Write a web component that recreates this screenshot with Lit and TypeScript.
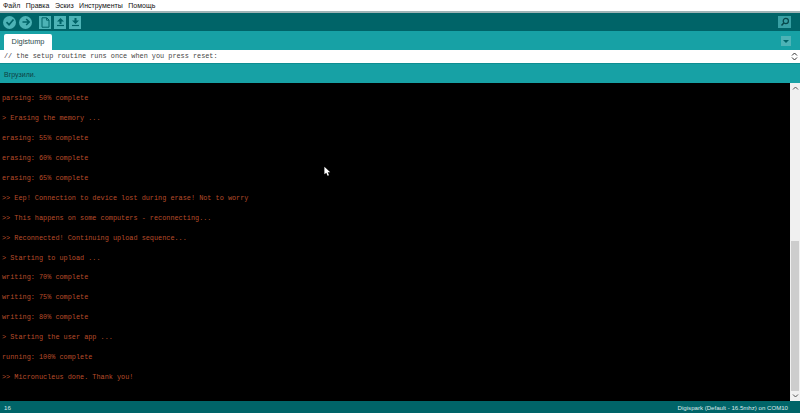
import { LitElement, html, css, svg } from "lit";
import { customElement } from "lit/decorators.js";

const LINES = [
  "parsing: 50% complete",
  "> Erasing the memory ...",
  "erasing: 55% complete",
  "erasing: 60% complete",
  "erasing: 65% complete",
  ">> Eep! Connection to device lost during erase! Not to worry",
  ">> This happens on some computers - reconnecting...",
  ">> Reconnected! Continuing upload sequence...",
  "> Starting to upload ...",
  "writing: 70% complete",
  "writing: 75% complete",
  "writing: 80% complete",
  "> Starting the user app ...",
  "running: 100% complete",
  ">> Micronucleus done. Thank you!",
];
const MENU = ["Файл", "Правка", "Эскиз", "Инструменты", "Помощь"];

@customElement("app-root")
export class AppRoot extends LitElement {
  static styles = css`
    :host { display: flex; flex-direction: column; width: 800px; height: 413px; overflow: hidden; font-family: "Liberation Sans", Arial, sans-serif; background: #000; position: relative; }
    .menu { height: 11px; background: #fff; display: flex; gap: 5.5px; padding: 0 0 0 3px; font-size: 7px; line-height: 11px; color: #111; flex: none; }
    .sep { height: 2px; background: #9fb4b6; flex: none; }
    .toolbar { height: 18px; background: #006468; flex: none; display: flex; align-items: center; padding: 0 9px 0 3px; }
    .round { width: 13px; height: 13px; border-radius: 50%; background: #4db3b6; margin-right: 3px; display: flex; align-items: center; justify-content: center; }
    .sq { width: 12px; height: 13px; background: #4db3b6; display: flex; align-items: center; justify-content: center; margin-left: 3px; }
    .sq.first { margin-left: 4px; }
    .spacer { flex: 1; }
    .search { width: 13px; height: 12px; background: #38a0a4; display: flex; align-items: center; justify-content: center; }
    .tabs { height: 19px; background: #17a1a5; flex: none; display: flex; align-items: flex-end; padding-left: 4px; padding-right: 9px; justify-content: space-between; }
    .tab { width: 48px; height: 16px; background: #fff; border-radius: 2px 2px 0 0; font-size: 7.4px; line-height: 16px; color: #2b4a4c; text-align: center; }
    .tabmenu { width: 10px; height: 10px; background: #4db3b6; margin-bottom: 4px; display: flex; align-items: center; justify-content: center; }
    .editor { height: 13px; background: #fff; flex: none; display: flex; }
    .code { flex: 1; font-family: "Liberation Mono", monospace; font-size: 6.85px; line-height: 13px; color: #444; padding-left: 4px; white-space: pre; }
    .vbar { width: 9px; display: flex; flex-direction: column; align-items: center; justify-content: center; background: #fff; gap: 1px; margin-right: 1px; }
    .status { height: 20px; background: #17a1a5; flex: none; font-size: 7px; line-height: 21px; color: #0f3f42; padding-left: 4px; border-top: 1px solid #0f8e92; box-sizing: border-box; }
    .console { flex: 1; min-height: 0; display: flex; background: #000; }
    .log { flex: 1; padding: 5px 0 0 2px; font-family: "Liberation Mono", monospace; font-size: 6.85px; line-height: 20px; color: #b84c2a; white-space: pre; }
    .log div { height: 19.95px; }
    .track { width: 10px; background: #f0f0f0; display: flex; flex-direction: column; align-items: center; }
    .arrow { height: 10px; display: flex; align-items: center; justify-content: center; flex: none; }
    .gap { flex: 1; }
    .thumb { height: 150px; width: 8px; background: #cdcdcd; flex: none; }
    .foot { height: 12px; flex: none; background: #006468; color: #dceaea; font-size: 6.1px; line-height: 14px; display: flex; justify-content: space-between; padding: 0 12px 0 4px; }
    .cursor { position: absolute; left: 324px; top: 166px; width: 7px; height: 11px; }
  `;

  chev(up: boolean, color = "#555") {
    return html`<svg width="7" height="4" viewBox="0 0 7 4"><path d=${up ? "M1 3.5 3.5 1 6 3.5" : "M1 .5 3.5 3 6 .5"} fill="none" stroke=${color} stroke-width="1"/></svg>`;
  }

  render() {
    const ic = "#006468";
    return html`
      <div class="menu">${MENU.map((m) => html`<span>${m}</span>`)}</div>
      <div class="sep"></div>
      <div class="toolbar">
        <div class="round"><svg width="10" height="10" viewBox="0 0 10 10"><path d="M1.5 5.2 4 7.7 8.5 2.5" fill="none" stroke=${ic} stroke-width="1.7"/></svg></div>
        <div class="round"><svg width="10" height="10" viewBox="0 0 10 10"><path d="M1.5 5H8M5.2 2 8.2 5 5.2 8" fill="none" stroke=${ic} stroke-width="1.6"/></svg></div>
        <div class="sq first"><svg width="9" height="11" viewBox="0 0 9 11"><path d="M1 .8H5.8L8 3V10.2H1Z M5.6 1V3.2H8" fill="none" stroke=${ic} stroke-width="1"/></svg></div>
        <div class="sq"><svg width="9" height="10" viewBox="0 0 9 10"><path d="M4.5 1 8 4.5H5.5V7H3.5V4.5H1Z" fill=${ic}/><path d="M1 8.5H8" stroke=${ic} stroke-width="1.2"/></svg></div>
        <div class="sq"><svg width="9" height="10" viewBox="0 0 9 10"><path d="M3.5 1H5.5V3.5H8L4.5 7 1 3.5H3.5Z" fill=${ic}/><path d="M1 8.5H8" stroke=${ic} stroke-width="1.2"/></svg></div>
        <div class="spacer"></div>
        <div class="search"><svg width="10" height="10" viewBox="0 0 10 10"><circle cx="5.8" cy="4" r="2.6" fill="none" stroke="#06464a" stroke-width="1.2"/><path d="M3.8 6 1.5 8.5" stroke="#06464a" stroke-width="1.5"/></svg></div>
      </div>
      <div class="tabs">
        <div class="tab">Digistump</div>
        <div class="tabmenu"><svg width="6" height="3" viewBox="0 0 6 3"><path d="M0 0H6L3 3Z" fill=${ic}/></svg></div>
      </div>
      <div class="editor">
        <div class="code">// the setup routine runs once when you press reset:</div>
        <div class="vbar">${this.chev(true, "#333")}${this.chev(false, "#333")}</div>
      </div>
      <div class="status">Вгрузили.</div>
      <div class="console">
        <div class="log">${LINES.map((l) => html`<div>${l}</div>`)}</div>
        <div class="track">
          <div class="arrow">${this.chev(true)}</div>
          <div class="gap"></div>
          <div class="thumb"></div>
          <div class="arrow">${this.chev(false)}</div>
        </div>
      </div>
      <div class="foot"><span>16</span><span>Digispark (Default - 16.5mhz) on COM10</span></div>
      <svg class="cursor" viewBox="0 0 9 13">${svg`<path d="M.5.5V10L3 8 4.6 12 6.4 11.2 4.8 7.6H8Z" fill="#fff"/>`}</svg>
    `;
  }
}
